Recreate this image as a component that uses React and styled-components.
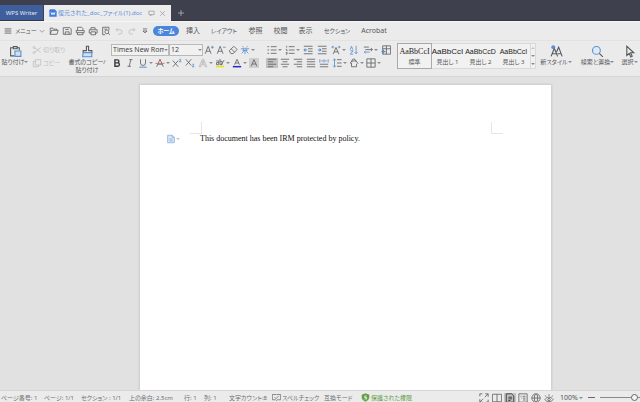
import React from "react";
import styled, { createGlobalStyle } from "styled-components";

const GRAY = "#5f6165";
const BLUE = "#5b8fd0";

const icons = {
  menu: <path d="M2 3.5h8M2 6h8M2 8.5h8" />,
  open: <path d="M1.5 10V2.5h3l1 1.3h4V5M1.5 10l1.6-4.8h8L9.5 10z" />,
  save: <path d="M1.5 2h8l1.5 1.5V10H1.500zM4 10V7h4.500v3M4 4.200h4" />,
  exportPdf: <path d="M3 5V1.500h5l1.500 1.500V5M1.500 5.500h9M3 8v2.500h6.500V8M1.500 5v3h9.500V5" />,
  print: <path d="M3.5 4.5V2h5v2.5M3.5 8.5H1.5v-4h9.500v4H9M3.5 7h5.500v3.500H3.500z" />,
  preview: (
    <>
      <path d="M5 10.5H2v-9h7.500V5" />
      <circle cx="7" cy="7" r="2.3" />
      <path d="M8.7 8.7l2 2M4 3.8h3" />
    </>
  ),
  undo: <path d="M4.5 2.5L2.5 4.5l2 2M2.5 4.5H7a2.6 2.6 0 010 5.2H5" />,
  redo: <path d="M7.5 2.5l2 2-2 2M9.5 4.5H5a2.6 2.6 0 000 5.2h2" />,
  customize: <path d="M3.500 3.500h5M3.500 6L6 8.200 8.500 6z" />,
  screen: <path d="M1.500 2h9v6h-9zM4.500 8v2l2-2" />,
  close: <path d="M2 2l8 8M10 2l-8 8" />,
  plus: <path d="M6 1.5v9M1.5 6h9" />,
  chevron: <path d="M1.5 4L6 8.500l4.500-4.500" />,
  cut: (
    <>
      <path d="M3.5 3.5l7 5.500M3.5 8.5l7-5.500" />
      <circle cx="2.5" cy="3" r="1.2" />
      <circle cx="2.5" cy="9" r="1.2" />
    </>
  ),
  copy: <path d="M4 2h6.5v6.5H4zM4 4H1.5v6.5H8v-2" />,
  paste: (
    <>
      <path d="M4 2.5H1.5V10H5M7.5 2.5H9.500V5M4 1.5h3.5v2H4z" />
      <path d="M5.5 5.5H11v5H5.5z" stroke={BLUE} fill="#cfe0f3" />
    </>
  ),
  painter: (
    <>
      <path d="M5 1.2h2v4h3v2H2v-2h3z" />
      <path d="M2 7.2h8v3.6H1.500z" stroke={BLUE} fill="#cfe0f3" />
    </>
  ),
  grow: (
    <>
      <path d="M1.500 10.500l3.500-9 3.500 9M2.700 7.5h4.600" />
      <path d="M10 1v3.500M8.300 2.700h3.500" stroke={BLUE} />
    </>
  ),
  shrink: (
    <>
      <path d="M1.500 10.500l3.500-9 3.500 9M2.700 7.5h4.600" />
      <path d="M8.300 2.700h3.500" stroke={BLUE} />
    </>
  ),
  eraser: <path d="M1.5 7L7 1.500l4 4L6 10.300H3.500zM4 4.700l4 4" />,
  phonetic: (
    <>
      <path d="M3 1.500l1.500 1.500M9 1.500L7.500 3M1 4.5h10M3 6.5h6" stroke={BLUE} />
      <path d="M4.5 4.5v3L2 10M7.5 4.5v3L10 10M6 7v4" stroke={BLUE} />
    </>
  ),
  bold: <path d="M3.5 2.2h3a1.8 1.8 0 010 3.6h-3zM3.5 5.8h3.4a2 2 0 010 4H3.5z" strokeWidth="1.7" stroke="#3a3a3a" />,
  italic: <path d="M5 2h4M3 10h4M7 2l-2 8" />,
  underline: (
    <>
      <path d="M3 1.500V6a3 3 0 006 0V1.500" />
      <path d="M1.500 11h9" stroke={BLUE} strokeWidth="1.2" />
    </>
  ),
  fontEffect: (
    <>
      <path d="M2 10.500L6 1.500l4 9M3.5 7.5h5" />
      <path d="M.500 6.500h11" stroke="#d4665f" />
    </>
  ),
  superscript: (
    <>
      <path d="M1 3l6.500 7.500M7.500 3L1 10.500" />
      <path d="M8.5 2c.7-1 2.5-.7 2.2.5-.2.7-2 1.300-2.200 2h2.700" stroke={BLUE} />
    </>
  ),
  subscript: (
    <>
      <path d="M1 1.500L7.500 9M7.500 1.500L1 9" />
      <path d="M8.5 8c.7-1 2.5-.7 2.2.5-.2.7-2 1.300-2.200 2h2.700" stroke={BLUE} />
    </>
  ),
  textEffect: <path d="M1.5 10.5L5.3 1.5h1.4l3.800 9H8.700L7.800 8H4.200l-.9 2.500zM4.800 6.300h2.400L6 3.300z" stroke="#b4b6b8" />,
  highlight: (
    <>
      <path d="M1.5 3.500H4.500V8H1.800V5.500H4.500M6 1V8h2.500V4H6" />
      <path d="M7.500 8l3.500-5.500" />
      <path d="M1 10.200h10" stroke="#e6e030" strokeWidth="2" />
    </>
  ),
  fontColor: (
    <>
      <path d="M3 8l3-6.500L9 8M4 6h4" />
      <path d="M1 10.400h10" stroke="#2626c8" strokeWidth="1.800" />
    </>
  ),
  shadeText: (
    <>
      <path d="M0 0h12v12H0z" fill="#cfcfcf" stroke="none" />
      <path d="M2.500 10l3.500-8 3.500 8M3.800 7.200h4.400" />
    </>
  ),
  bullets: <path d="M4.5 2H11.500M4.5 6H11.500M4.5 10H11.500M.5 2h2M.5 6h2M.5 10h2" />,
  numbers: <path d="M4.5 2H11.500M4.5 6H11.500M4.5 10H11.500M2 1v2M1 5.200H2v1.500h1M1 9h1.500v2H1" />,
  outdent: (
    <>
      <path d="M1 1.500h10.500M6 4.500h5.500M6 7.500h5.500M1 10.500h10.500" />
      <path d="M5 6H1.5M3 4.2L1.3 6 3 7.8" stroke={BLUE} strokeWidth="1.300" />
    </>
  ),
  indent: (
    <>
      <path d="M1 1.500h10.500M6 4.500h5.500M6 7.500h5.500M1 10.500h10.500" />
      <path d="M1 6h3.5M3 4.200L4.700 6 3 7.800" stroke={BLUE} strokeWidth="1.300" />
    </>
  ),
  layoutText: (
    <>
      <path d="M2.500 11L6 3l3.500 8M3.700 8.200h4.600" />
      <path d="M2.5 1L1 2.500 2.500 4M9.500 1L11 2.500 9.500 4M1 2.500h3M8 2.500h3" stroke={BLUE} />
    </>
  ),
  sort: (
    <>
      <path d="M1.500 5.500l1.500-4 1.500 4M1.500 7h3.500l-3.500 4H5" stroke={BLUE} />
      <path d="M8.5 1v9.500M6.700 8.500l1.800 2 1.800-2" stroke={BLUE} />
    </>
  ),
  tabs: (
    <>
      <path d="M1 2.500h6M3 5.500h8M9.500 3.500l1.700 2-1.700 2" />
      <path d="M1.5 8.500H8M3.200 7L1.500 8.500 3.200 10" stroke={BLUE} />
    </>
  ),
  tableGrid: (
    <>
      <path d="M2 1h9.500v10H2zM2 4.500h9.500M6.500 1v10" />
      <path d="M.500 8h5M3 5.800v4.500" stroke={BLUE} strokeWidth="1.400" />
    </>
  ),
  left: <path d="M1 1.500h10M1 4.500h6.500M1 7.500h10M1 10.500h6.500" />,
  center: <path d="M1 1.500h10M3 4.500h6M1 7.500h10M3 10.500h6" />,
  right: <path d="M1 1.500h10M4.500 4.500H11M1 7.500h10M4.500 10.500H11" />,
  justify: <path d="M1 1.500h10M1 4.500h10M1 7.500h10M1 10.500h10" />,
  distribute: (
    <>
      <path d="M1 7.500h10M1 10.500h10" />
      <path d="M1 1.500v4M11 1.500v4M2.500 3.500h2.700M6.800 3.500h2.700M6 1.500v4" stroke={BLUE} />
    </>
  ),
  spacing: (
    <>
      <path d="M6 2h5.500M6 6h5.500M6 10h5.500" />
      <path d="M3 1v10M1.300 3L3 1l1.700 2M1.300 9L3 11l1.700-2" stroke={BLUE} />
    </>
  ),
  bucket: (
    <>
      <path d="M3.500 5V3a2.300 2.300 0 014.500 0v1M1.500 6l2-2.500h5L11 7M3 6v4.500h6V7M1.500 6L3 7" />
    </>
  ),
  borders: <path d="M1 1h10v10H1zM1 6h10M6 1v10" />,
  newStyle: (
    <>
      <path d="M1 10.5L4 3l3 7.500M2 8h4" />
      <path d="M6 6.500L8 2l3.200 8.500M6.800 8h3.500" />
      <circle cx="3" cy="2" r="1.800" fill={BLUE} stroke="none" />
    </>
  ),
  search: (
    <>
      <circle cx="5" cy="5" r="3.600" stroke={BLUE} fill="#dfeaf6" />
      <path d="M7.700 7.700l3.200 3.200" />
    </>
  ),
  pointer: <path d="M3.500 1.200v8.500l2.200-2 1.500 3.300 1.300-.6L7 7.200h3z" />,
  spell: <path d="M.5 2h5L6 2.600 6.500 2H11.500v7H7L6 10 5 9H.500zM3.500 5.500l2 2L9 3.800" />,
  fullscreen: <path d="M7.500 1h3.500v3.500M4.500 11H1V7.500M11 1L7 5M1 11l4-4M1 4V1h3M11 8v3H8" />,
  reading: <path d="M.5 1.500h11v9H.500zM6 1.500v9" />,
  pageView: <path d="M1.500 1h6.500L10.500 3.500v7.500h-9zM4 5h4.500M4 7h4.500M4 9h2.500" stroke="#444" strokeWidth="1.200" />,
  outline: <path d="M1 1h10v10H1zM3 4h1M5.500 4h3.500M4 6.200H5M6 6.200h3M6 8.400h3" />,
  web: (
    <>
      <circle cx="6" cy="6" r="5" />
      <ellipse cx="6" cy="6" rx="2" ry="5" />
      <path d="M1 6h10" />
    </>
  ),
  eye: (
    <>
      <path d="M1 8c2.500-4 7.500-4 10 0-2.500 3.200-7.500 3.200-10 0zM2.500 4.500L1.500 3M6 3.500V1.500M9.500 4.500l1-1.500" />
      <circle cx="6" cy="7.800" r="1.400" />
    </>
  ),
  shield: (
    <>
      <path d="M6 1l4.500 1.500V6c0 2.500-2 4-4.500 5-2.500-1-4.500-2.500-4.500-5V2.500z" fill="#5f9e45" stroke="#5f9e45" />
      <path d="M7.500 4H5v2h2.500v2H4.500" stroke="#fff" />
    </>
  ),
  docBlue: <path d="M2 1.500h5.500L10 4v6.500H2zM7.500 1.500V4H10M4 6h4M4 8.200h4" stroke="#8fb0dc" fill="#dbe7f6" />,
  writer: (
    <>
      <path d="M2 .5h6.500l3 3v8H.5V2z" fill="#3f7de0" stroke="none" />
      <path d="M3 5l1.500 3.500L6 5.500l1.500 3L9 5" stroke="#fff" strokeWidth="1.300" />
    </>
  ),
};

const Icon = ({ name, size = 10 }) => (
  <Glyph viewBox="0 0 12 12" $size={size} aria-hidden="true">
    {icons[name]}
  </Glyph>
);

const Tool = ({ name, label, menu, active, disabled }) => (
  <ToolButton aria-label={label} $active={active} disabled={disabled}>
    <ToolFace>
      <Icon name={name} />
    </ToolFace>
    {menu && <Caret />}
  </ToolButton>
);

const quickTools = [
  ["open", "開く"],
  ["save", "保存"],
  ["exportPdf", "PDF"],
  ["print", "印刷"],
  ["preview", "プレビュー"],
  ["undo", "元に戻す", true],
  ["redo", "やり直し", true],
  ["customize", "カスタマイズ"],
];

const menuTabs = [
  { text: "挿入", width: 24 },
  { text: "レイアウト", width: 38, kana: true },
  { text: "参照", width: 25 },
  { text: "校閲", width: 25 },
  { text: "表示", width: 25 },
  { text: "セクション", width: 38, kana: true },
  { text: "Acrobat", width: 36 },
];

const fontTools = [
  { name: "grow", label: "拡大" },
  { name: "shrink", label: "縮小" },
  { name: "eraser", label: "書式のクリア" },
  { name: "phonetic", label: "ルビ", menu: true },
];

const formatTools = [
  { name: "bold", label: "太字" },
  { name: "italic", label: "斜体" },
  { name: "underline", label: "下線", menu: true },
  { name: "fontEffect", label: "取り消し線", menu: true },
  { name: "superscript", label: "上付き" },
  { name: "subscript", label: "下付き" },
  { name: "textEffect", label: "文字の効果", menu: true },
  { name: "highlight", label: "蛍光ペン", menu: true },
  { name: "fontColor", label: "文字の色", menu: true },
  { name: "shadeText", label: "文字の網かけ" },
];

const listTools = [
  { name: "bullets", label: "箇条書き", menu: true },
  { name: "numbers", label: "段落番号", menu: true },
  { name: "outdent", label: "インデントを減らす" },
  { name: "indent", label: "インデントを増やす" },
  { name: "layoutText", label: "拡張書式", menu: true },
  { name: "sort", label: "並べ替え" },
  { name: "tabs", label: "タブ", menu: true },
  { name: "tableGrid", label: "表" },
];

const alignTools = [
  { name: "left", label: "左揃え", active: true },
  { name: "center", label: "中央揃え" },
  { name: "right", label: "右揃え" },
  { name: "justify", label: "両端揃え" },
  { name: "distribute", label: "均等割り付け" },
  { name: "spacing", label: "行間", menu: true },
  { name: "bucket", label: "塗りつぶし", menu: true },
  { name: "borders", label: "罫線", menu: true },
];

const styleCards = [
  { sample: "AaBbCcI", title: "標準", serif: true, active: true },
  { sample: "AaBbCcI", title: "見出し 1", big: true },
  { sample: "AaBbCcD", title: "見出し 2" },
  { sample: "AaBbCcI", title: "見出し 3" },
];

const statusItems = [
  ["ページ番号: 1", 43],
  ["ページ: 1/1", 37],
  ["セクション : 1/1", 48],
  ["上の余白: 2.5cm", 55],
  ["行: 1", 20],
  ["列: 1", 25],
  ["文字カウント:8", 43],
];

const viewTools = [
  ["fullscreen", "全画面"],
  ["reading", "閲覧"],
  ["pageView", "印刷レイアウト"],
  ["outline", "アウトライン"],
  ["web", "Web"],
  ["eye", "アイケア"],
];

const App = () => {
  return (
    <Wrapper>
      <GlobalStyle />
      <TitleBar>
        <WriterTab>WPS Writer</WriterTab>
        <DocTab>
          <Icon name="writer" size={8} />
          <DocName>復元された_doc_ファイル(1).doc</DocName>
          <Icon name="screen" size={7} />
          <IconButton aria-label="閉じる">
            <Icon name="close" size={7} />
          </IconButton>
        </DocTab>
        <NewTab aria-label="新規">
          <Icon name="plus" size={8} />
        </NewTab>
      </TitleBar>

      <MenuBar>
        <MenuButton>
          <Icon name="menu" />
          <span>メニュー</span>
          <Icon name="chevron" size={6} />
        </MenuButton>
        <QuickTools>
          {quickTools.map(([name, label, disabled]) => (
            <Tool key={name} name={name} label={label} disabled={disabled} />
          ))}
        </QuickTools>
        <HomeTab>ホーム</HomeTab>
        {menuTabs.map((tab) => (
          <MenuTab key={tab.text} $width={tab.width} $kana={tab.kana}>
            {tab.text}
          </MenuTab>
        ))}
      </MenuBar>

      <Ribbon>
        <BigButton $width={30}>
          <Icon name="paste" size={13} />
          <BigLabel>
            貼り付け
            <Caret />
          </BigLabel>
        </BigButton>
        <Clipboard>
          <TextButton disabled>
            <Icon name="cut" />
            切り取り
          </TextButton>
          <TextButton disabled>
            <Icon name="copy" />
            コピー
          </TextButton>
        </Clipboard>
        <BigButton $width={42}>
          <Icon name="painter" size={13} />
          <BigLabel>書式のコピー/</BigLabel>
          <BigLabel>貼り付け</BigLabel>
        </BigButton>

        <ToolGroup>
          <ToolRow>
            <SelectBox $width={58}>
              <Select aria-label="フォント" defaultValue="Times New Roman">
                <option>Times New Roman</option>
              </Select>
              <Caret />
            </SelectBox>
            <SelectBox $width={34}>
              <Select aria-label="サイズ" defaultValue="12">
                <option>12</option>
              </Select>
              <Caret />
            </SelectBox>
            {fontTools.map((tool) => (
              <Tool key={tool.name} {...tool} />
            ))}
          </ToolRow>
          <ToolRow $gap={1}>
            {formatTools.map((tool) => (
              <Tool key={tool.name} {...tool} />
            ))}
          </ToolRow>
        </ToolGroup>

        <ToolGroup>
          <ToolRow $gap={2}>
            {listTools.map((tool) => (
              <Tool key={tool.name} {...tool} />
            ))}
          </ToolRow>
          <ToolRow $gap={1}>
            {alignTools.map((tool) => (
              <Tool key={tool.name} {...tool} />
            ))}
          </ToolRow>
        </ToolGroup>

        <Gallery>
          {styleCards.map((card) => (
            <StyleCard key={card.title} $active={card.active}>
              <Sample $serif={card.serif} $big={card.big}>
                {card.sample}
              </Sample>
              <StyleTitle>{card.title}</StyleTitle>
            </StyleCard>
          ))}
          <GalleryScroll>
            <ScrollButton aria-label="上へ">
              <Caret $up $faint />
            </ScrollButton>
            <ScrollButton aria-label="下へ">
              <Caret />
            </ScrollButton>
            <ScrollButton aria-label="一覧">
              <Caret />
            </ScrollButton>
          </GalleryScroll>
        </Gallery>

        <BigButton $width={40}>
          <Icon name="newStyle" size={13} />
          <BigLabel>
            新スタイル
            <Caret />
          </BigLabel>
        </BigButton>
        <BigButton $width={43}>
          <Icon name="search" size={13} />
          <BigLabel>
            検索と置換
            <Caret />
          </BigLabel>
        </BigButton>
        <BigButton $width={21}>
          <Icon name="pointer" size={13} />
          <BigLabel>
            選択
            <Caret />
          </BigLabel>
        </BigButton>
      </Ribbon>

      <Workspace>
        <Page>
          <Marks>
            <Corner $side="right" />
            <Corner $side="left" />
          </Marks>
          <Line>
            <PasteOptions aria-label="オプション">
              <Icon name="docBlue" />
              <Caret $faint />
            </PasteOptions>
            <Paragraph>This document has been IRM protected by policy.</Paragraph>
          </Line>
        </Page>
      </Workspace>

      <StatusBar>
        {statusItems.map(([text, width]) => (
          <StatusItem key={text} $width={width}>
            {text}
          </StatusItem>
        ))}
        <StatusItem $width={52}>
          <Icon name="spell" size={9} />
          スペルチェック
        </StatusItem>
        <StatusItem $width={37}>互換モード</StatusItem>
        <StatusItem $width={52} $green>
          <Icon name="shield" size={9} />
          保護された権限
        </StatusItem>
        <Views>
          {viewTools.map(([name, label]) => (
            <Tool key={name} name={name} label={label} active={name === "pageView"} />
          ))}
        </Views>
        <ZoomButton>
          100%
          <Caret />
        </ZoomButton>
        <ZoomOut aria-label="縮小表示" />
        <Slider type="range" aria-label="ズーム" defaultValue="50" />
      </StatusBar>
    </Wrapper>
  );
};

const GlobalStyle = createGlobalStyle`
  body {
    margin: 0;
    overflow: hidden;
  }
  * {
    box-sizing: border-box;
  }
  button,
  select,
  input {
    margin: 0;
    padding: 0;
    border: 0;
    background: none;
    color: inherit;
    font: inherit;
    font-feature-settings: inherit;
    white-space: nowrap;
  }
`;

const Wrapper = styled.div`
  min-height: 100vh;
  display: flex;
  flex-direction: column;
  background: #e1e1e1;
  color: #55575b;
  font-family: "Noto Sans", "Noto Sans CJK JP", sans-serif;
  font-size: 7px;
  line-height: 8px;
  font-feature-settings: "palt";
`;

const Glyph = styled.svg`
  width: ${({ $size }) => $size}px;
  height: ${({ $size }) => $size}px;
  flex: none;
  fill: none;
  stroke: currentColor;
  stroke-width: 1;
`;

const Caret = styled.i`
  flex: none;
  border: 2px solid transparent;
  border-top-color: ${({ $faint }) => ($faint ? "#c2c4c7" : "#8b8d91")};
  border-bottom: 0;
  transform: ${({ $up }) => ($up ? "rotate(180deg)" : "none")};
`;

const TitleBar = styled.header`
  display: flex;
  height: 21px;
  padding-top: 5px;
  background: #3e414d;
  border-bottom: 1px solid #35363f;
`;
const WriterTab = styled.button`
  width: 43px;
  margin-right: 1px;
  background: #3f5f9c;
  color: #e4eaf5;
  font-size: 6px;
`;
const DocTab = styled.div`
  display: flex;
  align-items: center;
  width: 127px;
  height: 16px;
  padding: 0 5px;
  gap: 1px;
  color: #85878b;
  background: #ececec;
`;
const DocName = styled.span`
  flex: 1;
  color: #5f8fd8;
  white-space: nowrap;
  font-size: 6px;
`;
const IconButton = styled.button`
  display: flex;
  margin-left: 3px;
`;
const NewTab = styled.button`
  display: flex;
  align-items: center;
  padding: 0 6px;
  color: #c9cbd2;
`;

const MenuBar = styled.nav`
  display: flex;
  align-items: center;
  height: 19px;
  background: #ebebeb;
  border-top: 1px solid #f6f6f6;
`;
const MenuButton = styled.button`
  display: flex;
  align-items: center;
  gap: 2px;
  width: 45px;
  padding: 0 3px;
  font-size: 6px;
  span {
    flex: 1;
  }
`;
const QuickTools = styled.div`
  display: flex;
  gap: 1px;
  padding: 0 2px 0 3px;
`;
const HomeTab = styled.button`
  width: 26px;
  height: 10px;
  margin-right: 2px;
  border-radius: 5px;
  background: #4a86dc;
  color: #fff;
  font-size: 6px;
  font-weight: 700;
`;
const MenuTab = styled.button`
  width: ${({ $width }) => $width}px;
  font-size: ${({ $kana }) => ($kana ? 6 : 7)}px;
`;

const Ribbon = styled.section`
  display: flex;
  height: 37px;
  padding-top: 2px;
  background: #ebebeb;
  border-top: 1px solid #e2e2e2;
  border-bottom: 1px solid #d6d6d6;
`;
const BigButton = styled.button`
  display: flex;
  flex-direction: column;
  align-items: center;
  padding-top: 2px;
  width: ${({ $width }) => $width}px;
`;
const BigLabel = styled.span`
  display: flex;
  align-items: center;
  font-size: 6px;
`;
const Clipboard = styled.div`
  display: flex;
  flex-direction: column;
  width: 36px;
  padding-left: 2px;
`;
const TextButton = styled.button`
  display: flex;
  align-items: center;
  gap: 1px;
  height: 13px;
  font-size: 6px;
  color: #bfc1c3;
`;

const ToolGroup = styled.div`
  display: flex;
  flex-direction: column;
  margin: 0 3px;
`;
const ToolRow = styled.div`
  display: flex;
  align-items: center;
  height: 13px;
  gap: ${({ $gap = 0 }) => $gap}px;
`;
const ToolButton = styled.button`
  display: flex;
  align-items: center;
  color: ${GRAY};
  background: ${({ $active }) => ($active ? "#c2c2c2" : "none")};
  &:disabled {
    color: #b9bbbd;
  }
`;
const ToolFace = styled.span`
  display: flex;
  justify-content: center;
  width: 12px;
`;
const SelectBox = styled.span`
  display: flex;
  align-items: center;
  width: ${({ $width }) => $width}px;
  height: 12px;
  padding-left: 1px;
  border: 1px solid #b9b9b9;
  background: #f1f1f1;
`;
const Select = styled.select`
  flex: 1;
  min-width: 0;
  appearance: none;
  overflow: hidden;
  color: #444;
`;

const Gallery = styled.div`
  display: flex;
  height: 26px;
  margin-left: 2px;
  border: 1px solid #d9d9d9;
  background: #f1f1f1;
`;
const StyleCard = styled.button`
  display: flex;
  flex-direction: column;
  align-items: center;
  justify-content: space-between;
  width: 33px;
  padding: 4px 0 2px;
  outline: ${({ $active }) => ($active ? "1px solid #a9a9a9" : "none")};
`;
const Sample = styled.span`
  color: #222;
  font-family: ${({ $serif }) => ($serif ? '"Liberation Serif", serif' : '"Liberation Sans", sans-serif')};
  font-size: ${({ $big, $serif }) => ($big || $serif ? 8 : 7)}px;
`;
const StyleTitle = styled.span`
  font-size: 6px;
`;
const GalleryScroll = styled.div`
  display: flex;
  flex-direction: column;
  border-left: 1px solid #d9d9d9;
`;
const ScrollButton = styled.button`
  display: flex;
  flex: 1;
  align-items: center;
`;

const Workspace = styled.main`
  display: flex;
  flex: 1;
  padding: 8px 89px 0 140px;
`;
const Page = styled.article`
  flex: 1;
  background: #fff;
  box-shadow: 0 0 2px 1px #cbcbcb;
`;
const Marks = styled.div`
  display: flex;
  justify-content: space-between;
  padding: 37px 48px 0 50px;
`;
const Corner = styled.span`
  width: 12px;
  height: 12px;
  border-bottom: 1px solid #e6e6e6;
  border-${({ $side }) => $side}: 1px solid #e6e6e6;
`;
const Line = styled.div`
  display: flex;
  align-items: center;
  padding-left: 26px;
`;
const PasteOptions = styled.button`
  display: flex;
  align-items: center;
  width: 34px;
`;
const Paragraph = styled.p`
  margin: 0;
  color: #111;
  font-family: "Liberation Serif", serif;
  font-size: 8px;
`;

const StatusBar = styled.footer`
  display: flex;
  align-items: center;
  height: 12px;
  padding: 2px 0 0 1px;
  overflow: hidden;
  background: #ebebeb;
  border-top: 1px solid #d6d6d6;
  font-size: 6px;
`;
const StatusItem = styled.span`
  display: flex;
  align-items: center;
  gap: 1px;
  flex: none;
  width: ${({ $width }) => $width}px;
  white-space: nowrap;
  color: ${({ $green }) => ($green ? "#5f9e45" : "#6c6e72")};
`;
const Views = styled.div`
  display: flex;
  gap: 1px;
  margin-left: auto;
  padding-right: 5px;
`;
const ZoomButton = styled.button`
  display: flex;
  align-items: center;
  gap: 1px;
  width: 24px;
  font-size: 7px;
`;
const ZoomOut = styled.button`
  width: 7px;
  height: 1px;
  margin: 0 5px 0 4px;
  background: #66686c;
`;
const Slider = styled.input`
  flex: none;
  width: 68px;
  height: 8px;
  margin-right: -28px;
  appearance: none;
  &::-webkit-slider-runnable-track {
    height: 1px;
    background: #88898c;
  }
  &::-webkit-slider-thumb {
    appearance: none;
    width: 7px;
    height: 7px;
    margin-top: -3px;
    border: 1px solid #66686c;
    border-radius: 50%;
    background: #f4f4f4;
  }
`;

export default App;
